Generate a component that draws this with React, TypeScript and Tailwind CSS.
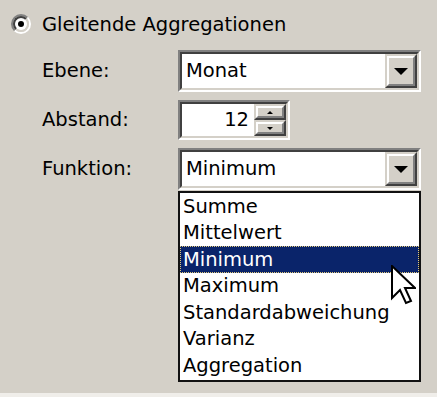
import React from "react";

function Sunken({ className, children }: { className: string; children?: React.ReactNode }) {
  return (
    <div className={"border-2 border-t-[#808080] border-l-[#808080] border-b-white border-r-white " + className}>
      <div className="h-full border-2 border-t-[#404040] border-l-[#404040] border-b-[#d4d0c8] border-r-[#d4d0c8] bg-white flex items-center">
        {children}
      </div>
    </div>
  );
}

function Raised({ className, children }: { className: string; children?: React.ReactNode }) {
  return (
    <div className={"border-2 border-t-[#d4d0c8] border-l-[#d4d0c8] border-b-[#404040] border-r-[#404040] " + className}>
      <div className="h-full border-2 border-t-white border-l-white border-b-[#808080] border-r-[#808080] bg-[#d4d0c8] flex items-center justify-center">
        {children}
      </div>
    </div>
  );
}

function DropButton() {
  return (
    <Raised className="w-[32px] h-full shrink-0">
      <svg width="14" height="7" viewBox="0 0 14 7">
        <path d="M0 0H14L7 7Z" fill="#000" />
      </svg>
    </Raised>
  );
}

const items = ["Summe", "Mittelwert", "Minimum", "Maximum", "Standardabweichung", "Varianz", "Aggregation"];

export default function App() {
  return (
    <div className="w-[437px] h-[397px] bg-[#d4d0c8] flex flex-col font-['DejaVu_Sans',sans-serif] text-[19.5px] text-black leading-none">
      <div className="flex-1 relative">
        <div className="flex items-center pl-[11px] pt-[14px] h-[34px] gap-[11px]">
          <div className="w-[20px] h-[20px] rounded-full border-2 border-t-[#808080] border-l-[#808080] border-b-white border-r-white">
            <div className="w-full h-full rounded-full border-2 border-t-[#404040] border-l-[#404040] border-b-[#d4d0c8] border-r-[#d4d0c8] bg-white flex items-center justify-center">
              <div className="w-[6px] h-[6px] rounded-full bg-black" />
            </div>
          </div>
          <span className="pt-[2px]">Gleitende Aggregationen</span>
        </div>

        <div className="mt-[16px] pl-[42px] grid grid-cols-[136px_243px] gap-y-[8px] items-center">
          <span>Ebene:</span>
          <Sunken className="h-[42px]">
            <span className="flex-1 pl-[4px]">Monat</span>
            <DropButton />
          </Sunken>

          <span>Abstand:</span>
          <Sunken className="h-[40px] w-[112px]">
            <span className="flex-1 text-right pr-[5px]">12</span>
            <div className="w-[32px] h-full flex flex-col shrink-0">
              <Raised className="h-1/2 w-full">
                <svg width="6" height="3" viewBox="0 0 6 3">
                  <path d="M0 3H6L3 0Z" fill="#000" />
                </svg>
              </Raised>
              <Raised className="h-1/2 w-full">
                <svg width="6" height="3" viewBox="0 0 6 3">
                  <path d="M0 0H6L3 3Z" fill="#000" />
                </svg>
              </Raised>
            </div>
          </Sunken>

          <span>Funktion:</span>
          <div className="relative">
            <Sunken className="h-[42px]">
              <span className="flex-1 pl-[4px]">Minimum</span>
              <DropButton />
            </Sunken>
            <div className="absolute left-0 top-[43px] w-[243px] border-2 border-[#111] bg-white pb-[1px]">
              {items.map((it) =>
                it === "Minimum" ? (
                  <div
                    key={it}
                    className="h-[26.5px] flex items-center pl-[3px] bg-[#0a246a] text-white outline-1 outline-dotted outline-[#e0c87a] -outline-offset-1"
                  >
                    {it}
                  </div>
                ) : (
                  <div key={it} className="h-[26.5px] flex items-center pl-[3px]">
                    {it}
                  </div>
                )
              )}
            </div>
          </div>
        </div>

        <svg className="absolute left-[391px] top-[265px]" width="25" height="40" viewBox="0 0 25 40">
          <path
            d="M1 1V33L9 25L15 38L20 36L14 23L24 23Z"
            fill="#fff"
            stroke="#000"
            strokeWidth="2"
            strokeLinejoin="miter"
          />
        </svg>
      </div>
      <div className="h-[4px] bg-[#f0eeea]" />
    </div>
  );
}
